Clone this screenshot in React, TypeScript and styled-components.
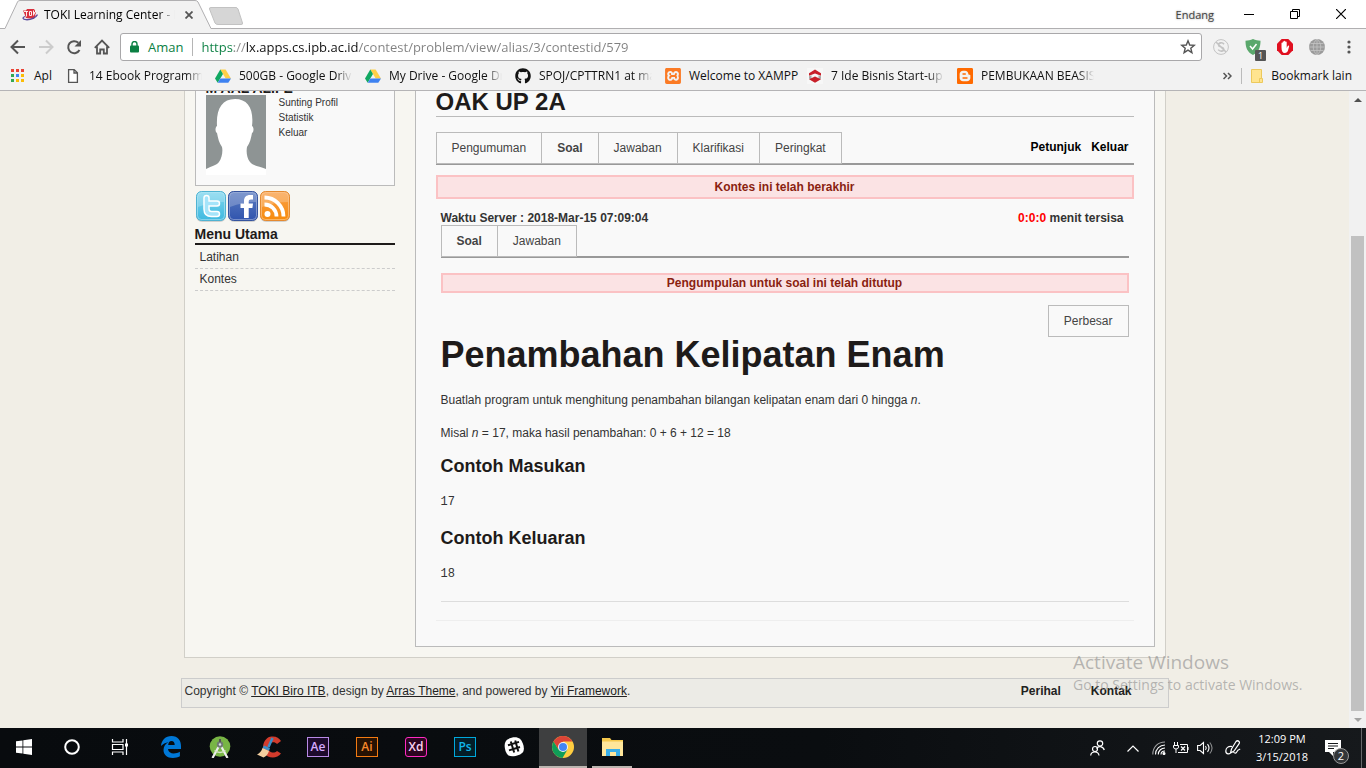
import React from "react";
import styled, { createGlobalStyle, css } from "styled-components";
import { FaGithub } from "react-icons/fa";
import { SiXampp, SiBlogger } from "react-icons/si";

const GlobalStyle = createGlobalStyle`
  *, *::before, *::after { box-sizing: border-box; }
  body { margin: 0; }
  h1, h2, h3, p, ul, pre { margin: 0; padding: 0; }
  button, input { font: inherit; }
  svg { display: block; flex: none; }
`;

const ui = `"Open Sans", "Noto Sans", sans-serif`;
const sans = `"Liberation Sans", Arial, sans-serif`;

const Screen = styled.div`
  display: flex;
  flex-direction: column;
  height: 100vh;
  overflow: hidden;
  font-family: ${ui};
  font-size: 12px;
`;

const BareButton = styled.button`
  display: flex;
  align-items: center;
  justify-content: center;
  padding: 0;
  border: 0;
  background: none;
  color: inherit;
  cursor: pointer;
`;

/* ---------- browser frame ---------- */

const Browser = styled.header`
  flex: none;
  background: #f2f2f2;
  border-bottom: 1px solid #b5b4b6;
`;

const TabStrip = styled.div`
  display: flex;
  height: 29px;
  padding-left: 5px;
  background: #fff;
  border-bottom: 1px solid #b0afb1;
`;

const BrowserTab = styled.div`
  position: relative;
  display: flex;
  align-items: center;
  width: 206px;
  height: 29px;
  padding: 0 14px 0 17px;
  gap: 6px;
`;

const TabShape = styled.svg`
  position: absolute;
  left: 0;
  top: 0;
`;

const Favicon = styled.svg`
  position: relative;
`;

const Faded = styled.span<{ $width: number }>`
  position: relative;
  width: ${(p) => p.$width}px;
  overflow: hidden;
  white-space: nowrap;
  mask-image: linear-gradient(to right, #000 calc(100% - 16px), transparent);
`;

const Label = styled.span<{ $width: number }>`
  width: ${(p) => p.$width}px;
`;

const TabTitle = styled(Faded)`
  line-height: 18px;
`;

const TabClose = styled(BareButton)`
  position: relative;
  width: 16px;
  height: 16px;
  margin-left: auto;
`;

const NewTab = styled(BareButton)`
  align-self: flex-start;
  margin-top: 6px;
  margin-left: -3px;
`;

const WindowControls = styled.div`
  display: flex;
  align-items: center;
  margin-left: auto;
  padding-right: 2px;
`;

const Profile = styled.span`
  margin-right: 12px;
  font-size: 11px;
  color: #444;
  text-shadow: 0 0 2px #999;
`;

const WindowButton = styled(BareButton)`
  width: 46px;
  height: 28px;
`;

const Toolbar = styled.div`
  display: flex;
  align-items: center;
  padding: 4px 9px 0 4px;
`;

const ToolButton = styled(BareButton)`
  width: 28px;
  height: 28px;
`;

const Omnibox = styled.div`
  display: flex;
  flex: 1;
  align-items: center;
  height: 28px;
  margin: 0 3px 0 4px;
  padding: 0 5px 0 9px;
  border: 1px solid #a9a8aa;
  border-radius: 3px;
  background: #fff;
  font-size: 13px;
`;

const Secure = styled.span`
  margin-left: 9px;
  padding-right: 9px;
  border-right: 1px solid #b5b5b5;
  color: #0b8043;
  line-height: 18px;
`;

const Address = styled.input`
  flex: 1;
  min-width: 0;
  margin-left: 8px;
  padding: 0;
  border: 0;
  outline: 0;
  color: #777;
  background: linear-gradient(to right, #0b8043 33px, #888 33px 45px, #111 45px 157px, #808080 157px);
  background-clip: text;
  -webkit-text-fill-color: transparent;
`;

const Extension = styled(BareButton)`
  position: relative;
  width: 32px;
  height: 28px;
`;

const ExtensionBadge = styled.span`
  position: absolute;
  right: 3px;
  bottom: 0;
  width: 11px;
  height: 11px;
  border-radius: 1px;
  background: #555;
  color: #fff;
  font-size: 9px;
  line-height: 11px;
  text-align: center;
`;

const MenuButton = styled(BareButton)`
  width: 16px;
  height: 28px;
  margin-left: 8px;
`;

const BookmarkBar = styled.nav`
  display: flex;
  align-items: center;
  height: 29px;
  padding: 0 14px 0 8px;
  gap: 13px;
`;

const Bookmark = styled.a`
  display: flex;
  align-items: center;
  gap: 8px;
  color: #111;
  line-height: 18px;
  text-decoration: none;
  white-space: nowrap;
`;

const BookmarkTail = styled.div`
  display: flex;
  align-items: center;
  gap: 9px;
  margin-left: auto;
`;

const BookmarkDivider = styled.span`
  width: 1px;
  height: 16px;
  background: #bbb;
`;

/* ---------- web page ---------- */

const Viewport = styled.div`
  position: relative;
  display: flex;
  flex: 1;
  min-height: 0;
  background: #f1eee6;
`;

const Page = styled.div`
  flex: 1;
  overflow: hidden;
  font-family: ${sans};
  font-size: 12px;
  line-height: 18px;
  color: #333;
`;

/* The page is shown scrolled down past its banner. */
const Scrolled = styled.div`
  margin-top: -40px;
`;

const Container = styled.div`
  display: flex;
  gap: 20px;
  max-width: 982px;
  margin: 0 auto;
  padding: 10px;
  border: 1px solid #d1cfc8;
  background: #f7f6f1;
`;

const Sidebar = styled.aside`
  width: 200px;
  flex: none;
`;

const ProfileBox = styled.section`
  padding: 18px 10px 10px;
  border: 1px solid #bbb;
  background: #f9f9f9;
`;

const ProfileName = styled.h3`
  font-size: 14px;
  line-height: 14px;
  color: #1e1b1a;
`;

const ProfileRow = styled.div`
  display: flex;
  gap: 13px;
`;

const ProfileLinks = styled.ul`
  list-style: none;
  font-size: 10px;
  line-height: 15px;
`;

const PlainLink = styled.a`
  color: inherit;
  text-decoration: none;
`;

const Social = styled.div`
  display: flex;
  margin: 4px 0 3px;
`;

const MenuTitle = styled.h3`
  border-bottom: 2px solid #1e1b1a;
  font-size: 14px;
  line-height: 18px;
  color: #1e1b1a;
`;

const MenuList = styled.ul`
  padding-top: 2px;
  list-style: none;
`;

const MenuItem = styled.li`
  padding: 1px 5px 2px;
  border-bottom: 1px dashed #ccc;
`;

const Main = styled.main`
  flex: 1;
  min-width: 0;
  padding: 25px 20px;
  border: 1px solid #bbb;
  background: #f9f9f9;
`;

const ContestTitle = styled.h2`
  padding-bottom: 1px;
  border-bottom: 1px solid #bbb;
  font-size: 24px;
  line-height: 27px;
  color: #1e1b1a;
`;

const Tabs = styled.nav`
  display: flex;
  margin-top: 15px;
  border-bottom: 2px solid #999;
`;

const box = css`
  border: 1px solid #bbb;
  background: #f9f9f9;
  color: #444;
  font-size: 12px;
  line-height: 18px;
`;

const Tab = styled.a<{ $active?: boolean }>`
  ${box}
  margin-bottom: -1px;
  padding: 6px 15px;
  font-weight: ${(p) => (p.$active ? "bold" : "normal")};
  text-decoration: none;
  & + & { border-left: 0; }
`;

const TabLinks = styled.div`
  display: flex;
  align-items: center;
  gap: 10px;
  margin-left: auto;
  padding: 0 5px 2px 0;
  font-weight: bold;
  color: #000;
`;

const Alert = styled.div<{ $compact?: boolean }>`
  margin-top: ${(p) => (p.$compact ? 15 : 10)}px;
  padding: ${(p) => (p.$compact ? 0 : 1)}px 0;
  border: 2px solid #fbc2c4;
  background: #fbe3e4;
  color: #8a1f11;
  font-weight: bold;
  line-height: ${(p) => (p.$compact ? 16 : 18)}px;
  text-align: center;
`;

const Problem = styled.section`
  margin-top: 12px;
  padding: 0 5px 18px;
  border-bottom: 1px solid #eee;
  ${Tabs} { margin-top: 0; }
`;

const Clock = styled.div`
  display: flex;
  justify-content: space-between;
  padding-right: 5px;
  font-weight: bold;
  line-height: 14px;
`;

const Remaining = styled.span`
  color: #f00;
`;

const Enlarge = styled.button`
  ${box}
  display: block;
  height: 32px;
  margin: 12px 0 0 auto;
  padding: 0 15px;
  cursor: pointer;
`;

const ProblemTitle = styled.h1`
  margin-bottom: 18px;
  font-size: 36px;
  line-height: 36px;
  color: #1e1b1a;
`;

const Paragraph = styled.p`
  margin-bottom: 15px;
`;

const SampleTitle = styled.h3`
  margin-bottom: 18px;
  font-size: 18px;
  line-height: 18px;
  color: #1e1b1a;
`;

const Sample = styled.pre`
  margin-bottom: 18px;
  font-family: "Liberation Mono", monospace;
  font-size: 12px;
  line-height: 18px;
`;

const Rule = styled.hr`
  height: 1px;
  margin: 0;
  border: 0;
  background: #ddd;
`;

const Footer = styled.footer`
  display: flex;
  justify-content: space-between;
  max-width: 988px;
  height: 30px;
  margin: 20px auto;
  padding: 3px 36px 0 3px;
  border: 1px solid #ccc;
  background: #ecebe6;
`;

const FooterLink = styled.a`
  color: #222;
`;

const FooterNav = styled.nav`
  display: flex;
  gap: 30px;
  font-weight: bold;
  color: #222;
`;

const ScrollBar = styled.div`
  display: flex;
  flex-direction: column;
  align-items: center;
  width: 17px;
  background: #f1f1f1;
`;

const ScrollSpace = styled.div`
  flex: 128;
`;

const ScrollThumb = styled.div`
  flex: 475;
  width: 13px;
  background: #c1c1c1;
`;

const ScrollButton = styled(BareButton)`
  width: 17px;
  height: 17px;
`;

const Watermark = styled.div`
  position: absolute;
  right: 57px;
  bottom: 32px;
  width: 236px;
  color: rgba(140, 140, 140, 0.6);
  font-size: 14px;
  line-height: 22px;
  white-space: nowrap;
  pointer-events: none;
`;

const WatermarkTitle = styled.div`
  font-size: 19px;
  line-height: 24px;
`;

/* ---------- taskbar ---------- */

const Taskbar = styled.footer`
  display: flex;
  flex: none;
  height: 40px;
  background: linear-gradient(to right, #080b0e, #0a0d10 60%, #16191c);
  color: #fff;
`;

const StartGroup = styled.div`
  display: flex;
`;

const AppGroup = styled.div`
  display: flex;
  gap: 1px;
  margin-left: 3px;
`;

const TaskButton = styled(BareButton)<{ $active?: boolean }>`
  width: 48px;
  height: 40px;
  background: ${(p) => (p.$active ? "#3e3f40" : "none")};
  border-bottom: 2px solid ${(p) => (p.$active ? "#bbb5b0" : "transparent")};
`;

const OpenTaskButton = styled(TaskButton)`
  width: 40px;
  margin-left: 4px;
  border-color: #bbb5b0;
`;

const AdobeTile = styled.span<{ $tint: string; $fill: string; $ink: string; $round?: boolean }>`
  width: 22px;
  height: 20px;
  border: 1px solid ${(p) => p.$tint};
  border-radius: ${(p) => (p.$round ? 3 : 0)}px;
  background: ${(p) => p.$fill};
  color: ${(p) => p.$ink};
  font-family: ${ui};
  font-size: 12px;
  font-weight: 600;
  line-height: 17px;
  text-align: center;
`;

const Tray = styled.div`
  display: flex;
  align-items: center;
  margin-left: auto;
`;

const TrayButton = styled(BareButton)<{ $width: number }>`
  position: relative;
  width: ${(p) => p.$width}px;
  height: 40px;
`;

const TrayClock = styled.div`
  width: 66px;
  font-size: 11px;
  line-height: 18px;
  text-align: center;
`;

const NoticeButton = styled(TrayButton)`
  padding-right: 10px;
`;

const NoticeCount = styled.span`
  position: absolute;
  right: 12px;
  bottom: 4px;
  width: 16px;
  height: 16px;
  border: 1px solid #999;
  border-radius: 50%;
  background: #333639;
  font-size: 11px;
  line-height: 14px;
  text-align: center;
`;

const ShowDesktop = styled(BareButton)`
  width: 5px;
  height: 40px;
  border-left: 1px solid #66686a;
`;

/* ---------- drawings ---------- */

const DriveIcon = () => (
  <svg width="16" height="16" viewBox="0 0 16 16">
    <path d="M5.3 1.5h5.3L16 10.4h-5.3z" fill="#ffcf48" />
    <path d="M5.3 1.5 8 6 2.7 14.7 0 10.4z" fill="#11a861" />
    <path d="M5.4 10.4H16l-2.7 4.4H2.7z" fill="#3e82f1" />
  </svg>
);

const DocIcon = () => (
  <svg width="16" height="16" viewBox="0 0 16 16" fill="#fff" stroke="#555" strokeWidth="1.3">
    <path d="M3.6 1.6h5.6l3.2 3.2v9.6H3.6zM9 1.8V5h3.2" />
  </svg>
);

const AppsIcon = () => {
  const colors = ["#ea4335", "#ea4335", "#ea4335", "#34a853", "#4285f4", "#fbbc05", "#34a853", "#fbbc05", "#fbbc05"];
  return (
    <svg width="18" height="16" viewBox="0 0 18 16">
      {colors.map((c, i) => (
        <rect key={i} x={3 + (i % 3) * 5} y={1 + Math.floor(i / 3) * 5} width="3" height="3" fill={c} />
      ))}
    </svg>
  );
};

const HexIcon = () => (
  <svg width="16" height="16" viewBox="0 0 16 16">
    <rect width="16" height="16" fill="#f7f7f7" />
    <path d="M2 5.2 8 1.500l6 3.700v2.600L8 5.500 2 7.800z" fill="#c8202a" />
    <path d="M2 8.300l2.500-1v4L2 10.800zM14 8.300l-2.500-1v4l2.500-.5z" fill="#a8a8a8" />
    <path d="M2 11.200 8 8.500l6 2.700-6 3.600z" fill="#c8202a" />
  </svg>
);

const BookmarkFolderIcon = () => (
  <svg width="12" height="16" viewBox="0 0 12 16">
    <path d="M.5 1.5h10v9h1v4H.5z" fill="#ffe48f" stroke="#ecc95c" />
    <path d="M8.5 14v-3.5h2" fill="none" stroke="#ecc95c" />
  </svg>
);

const TokiIcon = () => (
  <Favicon width="16" height="16" viewBox="0 0 16 16">
    <path d="M1 3.5h3L5 2h7l1 1.500 1 4L12 12l-8-1-1.500-4z" fill="#d9303e" />
    <path d="M2 4.500h4M4.500 4.500v5M7.500 4.500v4h2v-4zM11.500 3.500v5M14 4l-2 2 2 2.500" stroke="#fff" strokeWidth=".9" fill="none" />
    <path d="M3 9.500c-3 1-2.500 3 1 3.200 5 .3 10-2 11.500-5.200" stroke="#5a4a9c" strokeWidth="1.300" fill="none" />
  </Favicon>
);

const Avatar = () => (
  <svg width="60" height="80" viewBox="0 0 60 80" role="img" aria-label="Foto profil">
    <rect width="60" height="80" fill="#8e9494" />
    <path
      d="M0 80v-6c6-3 11-4 13-7 3-4 4-11 3-15-3-4-4-9-5-14-2-1-2-6 0-7C10 14 16 4 29 4s19 10 17 27c2 1 2 6 0 7-1 5-2 10-5 14-1 5 0 11 3 15 3 4 9 4 16 7v6z"
      fill="#fff"
    />
  </svg>
);

const SocialTile = ({ id, top, bottom, edge, children }: { id: string; top: string; bottom: string; edge: string; children: React.ReactNode }) => (
  <svg width="32" height="32" viewBox="0 0 32 32">
    <defs>
      <linearGradient id={id} x1="0" y1="0" x2="0" y2="1">
        <stop offset="0" stopColor={top} />
        <stop offset="1" stopColor={bottom} />
      </linearGradient>
    </defs>
    <rect x="1" y="2" width="30" height="30" rx="6" fill="#aaa" opacity=".5" />
    <rect x="1.500" y="1.500" width="29" height="29" rx="5" fill={`url(#${id})`} stroke={edge} />
    <rect x="2.500" y="2.500" width="27" height="27" rx="4" fill="none" stroke="#fff" opacity=".35" />
    <path d="M3 6q0-3 3-3h20q3 0 3 3v6Q16 12 3 17z" fill="#fff" opacity=".22" />
    {children}
  </svg>
);

const Arrow = ({ color, flip }: { color: string; flip?: boolean }) => (
  <svg width="16" height="16" viewBox="0 0 16 16" fill="none" stroke={color} strokeWidth="2">
    <path d={flip ? "M1 8h13M8 1.500 14.500 8 8 14.500" : "M15 8H2M8 1.500 1.500 8 8 14.500"} />
  </svg>
);

const ReloadIcon = () => (
  <svg width="16" height="16" viewBox="0 0 16 16">
    <path d="M13.500 11A6 6 0 1 1 12.300 3.800" fill="none" stroke="#555" strokeWidth="2" />
    <path d="M15 1v6.500H8.500z" fill="#555" />
  </svg>
);

const HomeIcon = () => (
  <svg width="16" height="16" viewBox="0 0 16 16" fill="none" stroke="#555" strokeWidth="1.800">
    <path d="M.8 8.800 8 1.600l7.200 7.200M3 7.500V14.500h3.200v-4h3.600v4H13V7.500" />
  </svg>
);

const LockIcon = () => (
  <svg width="9" height="12" viewBox="0 0 9 12">
    <rect y="4.500" width="9" height="7" rx="1" fill="#0b8043" />
    <path d="M2 5V3a2.500 2.500 0 0 1 5 0v2" fill="none" stroke="#0b8043" strokeWidth="1.400" />
  </svg>
);

const StarIcon = () => (
  <svg width="16" height="16" viewBox="0 0 16 16" fill="none" stroke="#555" strokeWidth="1.400">
    <path d="m8 1.800 1.700 4.200 4.600.3-3.500 2.900 1.100 4.500L8 11.200l-3.900 2.500 1.100-4.500-3.500-2.900 4.600-.3z" />
  </svg>
);

const SwirlIcon = () => (
  <svg width="16" height="16" viewBox="0 0 16 16" fill="none" stroke="#c3c3c3">
    <circle cx="8" cy="8" r="7.400" />
    <path d="M11 5.200C9.500 3 5.500 3.600 5.500 6c0 2.600 5.300 1.600 5.300 4.200 0 2.300-4 2.600-5.600.4M3 3l10 10" strokeWidth="1.600" />
  </svg>
);

const ShieldIcon = () => (
  <svg width="16" height="16" viewBox="0 0 16 16">
    <path d="M8 0c2.500 1.300 5 1.600 7.500 1.700C15.500 8 14 13 8 16 2 13 .5 8 .5 1.700 3 1.600 5.500 1.300 8 0z" fill="#5aa86c" />
    <path d="m5 7 2.600 3L11.500 5" fill="none" stroke="#fff" strokeWidth="1.500" />
  </svg>
);

const HandIcon = () => (
  <svg width="16" height="16" viewBox="0 0 16 16">
    <path d="M4.700 0h6.600L16 4.700v6.600L11.300 16H4.700L0 11.300V4.700z" fill="#e01020" />
    <path d="M4.500 8.500V4.200c0-1 1.200-1 1.200 0V7V3c0-1 1.300-1 1.300 0v4V2.500c0-1 1.400-1 1.400 0V7V3.300c0-1 1.300-1 1.300 0V9l1-2c.5-1 1.700-.6 1.400.4L11 11.500C10.500 13 9.500 14 7.800 14 5.500 14 4.500 12 4.500 8.500z" fill="#fff" />
  </svg>
);

const GlobeIcon = () => (
  <svg width="16" height="16" viewBox="0 0 16 16">
    <circle cx="8" cy="8" r="8" fill="#9b9b9b" />
    <path d="M0 8h16M1.500 4.500h13M1.500 11.500h13M8 0v16M8 0C3 4 3 12 8 16M8 0c5 4 5 12 0 16" fill="none" stroke="#c4c4c4" strokeWidth=".8" />
  </svg>
);

const Task = {
  windows: (
    <svg width="16" height="16" viewBox="0 0 16 16" fill="#fff">
      <path d="M0 2.300 6.500 1.400v6.200H0zM7.300 1.300 16 0v7.600H7.300zM0 8.400h6.500v6.200L0 13.700zM7.300 8.400H16V16l-8.700-1.300z" />
    </svg>
  ),
  cortana: (
    <svg width="16" height="16" viewBox="0 0 16 16">
      <circle cx="8" cy="8" r="6.800" fill="none" stroke="#fff" strokeWidth="2" />
    </svg>
  ),
  taskView: (
    <svg width="18" height="16" viewBox="0 0 18 16" fill="none" stroke="#fff" strokeWidth="1.200">
      <path d="M1.500 0v3H12V0M1.500 16v-3H12v3M1.500 5.500H12v5H1.500zM15.500 0v16" />
      <rect x="14" y="4.500" width="3" height="3" fill="#fff" stroke="none" />
    </svg>
  ),
  edge: (
    <svg width="20" height="22" viewBox="0 0 20 22">
      <path
        d="M0 10C.6 4 4.500 0 10.500 0 17 0 20 4.500 20 10v3H7c.3 3 2.600 4.400 5.700 4.400 2.300 0 4.400-.6 6.200-1.700v4.600c-2 1.100-4.300 1.700-7 1.700C6 22 2.500 18.500 2.500 14c0-3.600 2-6.400 5-7.800C4.500 6.500 1.800 8 0 10zm7.200-1h6.500c0-2.500-1.200-4-3.200-4S7.500 6.600 7.200 9z"
        fill="#0078d7"
      />
    </svg>
  ),
  studio: (
    <svg width="22" height="22" viewBox="0 0 22 22">
      <circle cx="11" cy="10.500" r="10.300" fill="#78b545" />
      <path d="m10 10-6.500 12M12 10l6.500 12" stroke="#eee" strokeWidth="2.200" fill="none" />
      <path d="M5.500 14.500c3 2.600 8 2.600 11 0" stroke="#d5e5c5" strokeWidth="1.500" fill="none" />
      <circle cx="11" cy="8.500" r="3.200" fill="#6f7a72" />
      <circle cx="11" cy="8.500" r="1.200" fill="#dde" />
      <path d="M11 3v3" stroke="#555" strokeWidth="2" />
    </svg>
  ),
  ccleaner: (
    <svg width="24" height="22" viewBox="0 0 24 22">
      <path d="M24 5 20 8c-2.500-3-7.500-2.500-8.500 2.500-1 5.500 5 8 8.500 4.500l4 2.500C20 23 11 22.500 7.500 17.500 4 11 7 2.500 13 .8 18-.5 22 1.500 24 5z" fill="#d23b2c" />
      <path d="m15.500 2-4 9" stroke="#3b8fc8" strokeWidth="2.500" />
      <path d="M7 9.500 13 12l-1 3-6.500-3z" fill="#3b8fc8" />
      <path d="M5.500 12 12 15c-1 3.500-3 5.500-5.500 6.500L0 18.500C2.500 17.500 4.500 15 5.500 12z" fill="#f4cfa0" />
    </svg>
  ),
  slack: (
    <svg width="20" height="20" viewBox="0 0 20 20">
      <path d="M3 2.700C8-.4 13-.6 16 1.800c3 3.300 5 9 3.200 13C17 18.600 8 20.500 4.500 18.500 1.300 16.500-1.500 6.500 3 2.700z" fill="#fff" />
      <path d="m6.800 4.500 3.400 11M11.200 3.500l3.200 11M4 8.300l11-3.400M5 13.400l11-3.400" stroke="#111" strokeWidth="2" />
    </svg>
  ),
  chrome: (
    <svg width="22" height="22" viewBox="0 0 22 22">
      <circle cx="11" cy="11" r="11" fill="#ffcd40" />
      <path d="M1.500 5.500A11 11 0 0 1 20.500 5.500H11L6.500 13.500z" fill="#db4437" />
      <path d="M1.500 5.500A11 11 0 0 0 10.500 22L15.500 13.500H6.500z" fill="#0f9d58" />
      <circle cx="11" cy="11" r="5" fill="#f1f1f1" />
      <circle cx="11" cy="11" r="4" fill="#4285f4" />
    </svg>
  ),
  explorer: (
    <svg width="21" height="18" viewBox="0 0 21 18">
      <path d="M0 0h8l1.500 2H21v16H0z" fill="#f5c84c" />
      <path d="M0 3.500h21V18H0z" fill="#ffe69b" />
      <path d="M4 18v-7h14v7h-4v-4H8v4z" fill="#3aaee8" />
    </svg>
  ),
};

const adobe = [
  { label: "Ae", tint: "#b98ae6", ink: "#d6aaff", fill: "#1d0a2c" },
  { label: "Ai", tint: "#f37b12", ink: "#f9882a", fill: "#261203" },
  { label: "Xd", tint: "#ff2bc2", ink: "#fbd3f1", fill: "#2c0420", round: true },
  { label: "Ps", tint: "#00a8dc", ink: "#10b6ea", fill: "#031e28" },
];

const bookmarks = [
  { icon: <DocIcon />, label: "14 Ebook Programming" },
  { icon: <DriveIcon />, label: "500GB - Google Drive" },
  { icon: <DriveIcon />, label: "My Drive - Google Drive" },
  { icon: <FaGithub size={16} color="#111" />, label: "SPOJ/CPTTRN1 at master" },
  { icon: <SiXampp size={16} color="#fb7a24" />, label: "Welcome to XAMPP", width: 105 },
  { icon: <HexIcon />, label: "7 Ide Bisnis Start-up yang" },
  { icon: <SiBlogger size={16} color="#ff6a00" />, label: "PEMBUKAAN BEASISWA" },
];

/* ---------- screen ---------- */

export default function App() {
  return (
    <Screen>
      <GlobalStyle />
      <Browser>
        <TabStrip>
          <BrowserTab>
            <TabShape width="206" height="29" viewBox="0 0 206 29">
              <path d="M0 28.500 12.500 2Q13 .5 15 .5H190Q192 .5 193 2L206 28.500V29H0z" fill="#f2f2f2" />
              <path d="M0 28.500 12.500 2Q13 .5 15 .5H190Q192 .5 193 2L206 28.500" fill="none" stroke="#b0afb1" />
            </TabShape>
            <TokiIcon />
            <TabTitle $width={134}>TOKI Learning Center - Penambahan</TabTitle>
            <TabClose aria-label="Tutup tab">
              <svg width="8" height="8" viewBox="0 0 8 8" stroke="#555" strokeWidth="1.800">
                <path d="m.5.5 7 7M7.500.5l-7 7" />
              </svg>
            </TabClose>
          </BrowserTab>
          <NewTab aria-label="Tab baru">
            <svg width="36" height="20" viewBox="0 0 36 20">
              <path d="M3 1.500H28Q29 1.500 30 3L34.500 17Q35 18.500 33 18.500H10Q8 18.500 7 17L1.500 3Q1 1.500 3 1.500z" fill="#d6d6d6" stroke="#c2c2c2" />
            </svg>
          </NewTab>
          <WindowControls>
            <Profile>Endang</Profile>
            <WindowButton aria-label="Minimize">
              <svg width="10" height="10" viewBox="0 0 10 10"><path d="M0 5.500h10" stroke="#000" /></svg>
            </WindowButton>
            <WindowButton aria-label="Restore">
              <svg width="10" height="10" viewBox="0 0 10 10" fill="none" stroke="#000"><path d="M.5 2.500h7v7h-7zM2.500 2.500v-2h7v7h-2" /></svg>
            </WindowButton>
            <WindowButton aria-label="Close">
              <svg width="10" height="10" viewBox="0 0 10 10" stroke="#000" strokeWidth="1.200"><path d="m0 0 10 10M10 0 0 10" /></svg>
            </WindowButton>
          </WindowControls>
        </TabStrip>

        <Toolbar>
          <ToolButton aria-label="Kembali"><Arrow color="#555" /></ToolButton>
          <ToolButton aria-label="Maju"><Arrow color="#ccc" flip /></ToolButton>
          <ToolButton aria-label="Muat ulang"><ReloadIcon /></ToolButton>
          <ToolButton aria-label="Beranda"><HomeIcon /></ToolButton>
          <Omnibox>
            <LockIcon />
            <Secure>Aman</Secure>
            <Address
              aria-label="Alamat"
              defaultValue="https://lx.apps.cs.ipb.ac.id/contest/problem/view/alias/3/contestid/579"
            />
            <BareButton aria-label="Bookmark"><StarIcon /></BareButton>
          </Omnibox>
          <Extension aria-label="Ekstensi"><SwirlIcon /></Extension>
          <Extension aria-label="AdGuard"><ShieldIcon /><ExtensionBadge>1</ExtensionBadge></Extension>
          <Extension aria-label="Adblock"><HandIcon /></Extension>
          <Extension aria-label="Globe"><GlobeIcon /></Extension>
          <MenuButton aria-label="Menu">
            <svg width="4" height="14" viewBox="0 0 4 14" fill="#555">
              <circle cx="2" cy="2" r="1.600" /><circle cx="2" cy="7" r="1.600" /><circle cx="2" cy="12" r="1.600" />
            </svg>
          </MenuButton>
        </Toolbar>

        <BookmarkBar>
          <Bookmark href="#"><AppsIcon />Apl</Bookmark>
          {bookmarks.map((b) => (
            <Bookmark href="#" key={b.label}>
              {b.icon}
              {b.width ? <Label $width={b.width}>{b.label}</Label> : <Faded $width={113}>{b.label}</Faded>}
            </Bookmark>
          ))}
          <BookmarkTail>
            <BareButton aria-label="Bookmark lainnya">
              <svg width="9" height="8" viewBox="0 0 9 8" fill="none" stroke="#555" strokeWidth="1.500"><path d="m.5 1 3 3-3 3M5 1l3 3-3 3" /></svg>
            </BareButton>
            <BookmarkDivider />
            <Bookmark href="#"><BookmarkFolderIcon />Bookmark lain</Bookmark>
          </BookmarkTail>
        </BookmarkBar>
      </Browser>

      <Viewport>
        <Page>
          <Scrolled>
            <Container>
              <Sidebar>
                <ProfileBox>
                  <ProfileName>M AAL ALIFE</ProfileName>
                  <ProfileRow>
                    <Avatar />
                    <ProfileLinks>
                      <li><PlainLink href="#">Sunting Profil</PlainLink></li>
                      <li><PlainLink href="#">Statistik</PlainLink></li>
                      <li><PlainLink href="#">Keluar</PlainLink></li>
                    </ProfileLinks>
                  </ProfileRow>
                </ProfileBox>
                <Social>
                  <a href="#" aria-label="Twitter">
                    <SocialTile id="tw" top="#7fd6ee" bottom="#3fb9e0" edge="#4fb3d2">
                      <path d="M11.500 8V19q0 5 5 5h5.500M11.500 13.500H22" fill="none" stroke="#fff" strokeWidth="6.500" strokeLinecap="round" />
                      <path d="M11.500 8V19q0 5 5 5h5.500M11.500 13.500H22" fill="none" stroke="#a5e4fa" strokeWidth="3.600" strokeLinecap="round" />
                    </SocialTile>
                  </a>
                  <a href="#" aria-label="Facebook">
                    <SocialTile id="fb" top="#5b7cc0" bottom="#3054ae" edge="#35549f">
                      <path d="M17 28V18h-3.500v-4.500H17V11c0-4 2.500-6 6-6h3v4.500h-2c-1.700 0-2.300.7-2.300 2.200v1.800H26l-.6 4.500h-3.700v10z" fill="#fff" />
                    </SocialTile>
                  </a>
                  <a href="#" aria-label="RSS">
                    <SocialTile id="rss" top="#f9a04a" bottom="#f78b0c" edge="#e58a30">
                      <circle cx="8.500" cy="24" r="3" fill="#fff" />
                      <path d="M5.500 14.500a12 12 0 0 1 12 12M5.500 7.500a19 19 0 0 1 19 19" fill="none" stroke="#fff" strokeWidth="3.800" />
                    </SocialTile>
                  </a>
                </Social>
                <MenuTitle>Menu Utama</MenuTitle>
                <MenuList>
                  <MenuItem><PlainLink href="#">Latihan</PlainLink></MenuItem>
                  <MenuItem><PlainLink href="#">Kontes</PlainLink></MenuItem>
                </MenuList>
              </Sidebar>

              <Main>
                <ContestTitle>OAK UP 2A</ContestTitle>
                <Tabs>
                  <Tab href="#">Pengumuman</Tab>
                  <Tab href="#" $active>Soal</Tab>
                  <Tab href="#">Jawaban</Tab>
                  <Tab href="#">Klarifikasi</Tab>
                  <Tab href="#">Peringkat</Tab>
                  <TabLinks>
                    <PlainLink href="#">Petunjuk</PlainLink>
                    <PlainLink href="#">Keluar</PlainLink>
                  </TabLinks>
                </Tabs>
                <Alert>Kontes ini telah berakhir</Alert>
                <Problem>
                  <Clock>
                    <span>Waktu Server : 2018-Mar-15 07:09:04</span>
                    <span><Remaining>0:0:0</Remaining> menit tersisa</span>
                  </Clock>
                  <Tabs>
                    <Tab href="#" $active>Soal</Tab>
                    <Tab href="#">Jawaban</Tab>
                  </Tabs>
                  <Alert $compact>Pengumpulan untuk soal ini telah ditutup</Alert>
                  <Enlarge>Perbesar</Enlarge>
                  <ProblemTitle>Penambahan Kelipatan Enam</ProblemTitle>
                  <Paragraph>
                    Buatlah program untuk menghitung penambahan bilangan kelipatan enam dari 0 hingga <i>n</i>.
                  </Paragraph>
                  <Paragraph>
                    Misal <i>n</i> = 17, maka hasil penambahan: 0 + 6 + 12 = 18
                  </Paragraph>
                  <SampleTitle>Contoh Masukan</SampleTitle>
                  <Sample>17</Sample>
                  <SampleTitle>Contoh Keluaran</SampleTitle>
                  <Sample>18</Sample>
                  <Rule />
                </Problem>
              </Main>
            </Container>
            <Footer>
              <span>
                Copyright © <FooterLink href="#">TOKI Biro ITB</FooterLink>, design by{" "}
                <FooterLink href="#">Arras Theme</FooterLink>, and powered by <FooterLink href="#">Yii Framework</FooterLink>.
              </span>
              <FooterNav>
                <PlainLink href="#">Perihal</PlainLink>
                <PlainLink href="#">Kontak</PlainLink>
              </FooterNav>
            </Footer>
          </Scrolled>
        </Page>
        <ScrollBar>
          <ScrollButton aria-label="Gulir ke atas">
            <svg width="8" height="4" viewBox="0 0 8 4"><path d="M0 4 4 0l4 4z" fill="#505050" /></svg>
          </ScrollButton>
          <ScrollSpace />
          <ScrollThumb />
          <ScrollButton aria-label="Gulir ke bawah">
            <svg width="8" height="4" viewBox="0 0 8 4"><path d="m0 0 4 4 4-4z" fill="#a3a3a3" /></svg>
          </ScrollButton>
        </ScrollBar>
        <Watermark>
          <WatermarkTitle>Activate Windows</WatermarkTitle>
          Go to Settings to activate Windows.
        </Watermark>
      </Viewport>

      <Taskbar>
        <StartGroup>
          <TaskButton aria-label="Start">{Task.windows}</TaskButton>
          <TaskButton aria-label="Cortana">{Task.cortana}</TaskButton>
          <TaskButton aria-label="Task View">{Task.taskView}</TaskButton>
        </StartGroup>
        <AppGroup>
          <TaskButton aria-label="Edge">{Task.edge}</TaskButton>
          <TaskButton aria-label="Android Studio">{Task.studio}</TaskButton>
          <TaskButton aria-label="CCleaner">{Task.ccleaner}</TaskButton>
          {adobe.map((a) => (
            <TaskButton key={a.label}>
              <AdobeTile $tint={a.tint} $ink={a.ink} $fill={a.fill} $round={a.round}>{a.label}</AdobeTile>
            </TaskButton>
          ))}
          <TaskButton aria-label="Slack">{Task.slack}</TaskButton>
          <TaskButton aria-label="Chrome" $active>{Task.chrome}</TaskButton>
          <OpenTaskButton aria-label="File Explorer">{Task.explorer}</OpenTaskButton>
        </AppGroup>
        <Tray>
          <TrayButton $width={40} aria-label="People">
            <svg width="15" height="16" viewBox="0 0 15 16" fill="none" stroke="#fff" strokeWidth="1.200">
              <circle cx="10" cy="3.500" r="2.700" /><path d="M6.500 8.500C8 5.800 13 5.800 14.300 10" />
              <circle cx="5" cy="9" r="2.500" /><path d="M.7 15.500C1 10.800 8.500 10.800 9 15.500" />
            </svg>
          </TrayButton>
          <TrayButton $width={32} aria-label="Show hidden icons">
            <svg width="12" height="7" viewBox="0 0 12 7" fill="none" stroke="#fff" strokeWidth="1.200"><path d="m.5 6.500 5.500-5.500 5.500 5.500" /></svg>
          </TrayButton>
          <TrayButton $width={20} aria-label="Network">
            <svg width="14" height="14" viewBox="0 0 14 14" fill="none" stroke="#fff" strokeWidth="1.100">
              <path d="M.8 13.500C.8 6 6 1 13 1" opacity=".6" /><path d="M3.500 13.500C3.500 8 8 4 13 4M6.300 13.500C6.300 9.500 9.500 7 13 7M9 13.500C9 11 11 10 13 10" />
              <circle cx="12" cy="12.500" r="1" fill="#fff" />
            </svg>
          </TrayButton>
          <TrayButton $width={24} aria-label="Battery">
            <svg width="17" height="12" viewBox="0 0 17 12" fill="none" stroke="#fff">
              <path d="M1.500 0v3M4.500 0v3M.5 3.500h5V5q0 2-2.500 2T.5 5zM3 7v4M5 10.500h9.500v-8H7" /><path d="M15.500 5v3" opacity=".6" /><path d="m8 4.500 4 4M12 4.500l-4 4" strokeWidth="1.200" />
            </svg>
          </TrayButton>
          <TrayButton $width={24} aria-label="Volume">
            <svg width="16" height="14" viewBox="0 0 16 14" fill="none" stroke="#fff" strokeWidth="1.100">
              <path d="M.6 4.500h2.500L6.500 1.500v11L3.100 9.500H.6zM8.500 5q1.500 2 0 4M10.500 3.200q3 3.800 0 7.600" /><path d="M12.800 1.500q4.500 5.500 0 11" opacity=".5" />
            </svg>
          </TrayButton>
          <TrayButton $width={32} aria-label="Windows Ink">
            <svg width="16" height="16" viewBox="0 0 16 16" fill="none" stroke="#fff" strokeWidth="1.200">
              <path d="M5.500 13 6.500 9 11 1.500q1.500-1.500 3 0 1 1-.2 2.700L9 11zM7 6.500Q1 6 .8 11c0 3.500 4.500 4 5.200.5M8.500 12q2 2.500 3.500-.5.500-1.500 3.200-2.500" />
            </svg>
          </TrayButton>
          <TrayClock>12:09 PM<br />3/15/2018</TrayClock>
          <NoticeButton $width={46} aria-label="Notifications">
            <svg width="16" height="16" viewBox="0 0 16 16"><path d="M0 0h16v12H8v4l-4-4H0z" fill="#fff" /><path d="M3 3.500h10M3 6h10M3 8.500h6" stroke="#16191c" /></svg>
            <NoticeCount>2</NoticeCount>
          </NoticeButton>
          <ShowDesktop aria-label="Show desktop" />
        </Tray>
      </Taskbar>
    </Screen>
  );
}
